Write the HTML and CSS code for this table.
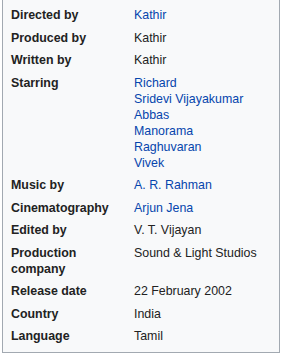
FILE: index.html
```html
<!DOCTYPE html>
<html>
<head>
<meta charset="utf-8">
<link rel="stylesheet" href="styles.css">
</head>
<body>
<div class="infobox">
  <div class="row"><div class="label">Directed by</div><div class="value"><a class="link">Kathir</a></div></div>
  <div class="row"><div class="label">Produced by</div><div class="value">Kathir</div></div>
  <div class="row"><div class="label">Written by</div><div class="value">Kathir</div></div>
  <div class="row"><div class="label">Starring</div><div class="value list">
    <a class="link">Richard</a>
    <a class="link">Sridevi Vijayakumar</a>
    <a class="link">Abbas</a>
    <a class="link">Manorama</a>
    <a class="link">Raghuvaran</a>
    <a class="link">Vivek</a>
  </div></div>
  <div class="row"><div class="label">Music by</div><div class="value"><a class="link">A. R. Rahman</a></div></div>
  <div class="row"><div class="label">Cinematography</div><div class="value"><a class="link">Arjun Jena</a></div></div>
  <div class="row"><div class="label">Edited by</div><div class="value">V. T. Vijayan</div></div>
  <div class="row"><div class="label">Production<br>company</div><div class="value">Sound &amp; Light Studios</div></div>
  <div class="row"><div class="label">Release date</div><div class="value">22 February 2002</div></div>
  <div class="row"><div class="label">Country</div><div class="value">India</div></div>
  <div class="row"><div class="label">Language</div><div class="value">Tamil</div></div>
</div>
</body>
</html>
```
FILE: styles.css
```css
html, body {
  margin: 0;
  padding: 0;
  background: #ffffff;
}
.infobox {
  margin-left: 2px;
  width: 276px;
  border: 1px solid #a2a9b1;
  border-top: none;
  background: #f8f9fa;
  padding: 4px 0 4.5px 8px;
  box-sizing: content-box;
  width: 268px;
  font-family: "Liberation Sans", Arial, sans-serif;
  font-size: 12.4px;
  line-height: 16px;
  color: #222222;
}
.row {
  display: grid;
  grid-template-columns: 123px 1fr;
  padding: 3px 0 3.5px 0;
}
.label {
  font-weight: bold;
  color: #222222;
}
.value {
  color: #222222;
}
.list {
  display: flex;
  flex-direction: column;
}
.link {
  color: #0645ad;
  text-decoration: none;
}
```
